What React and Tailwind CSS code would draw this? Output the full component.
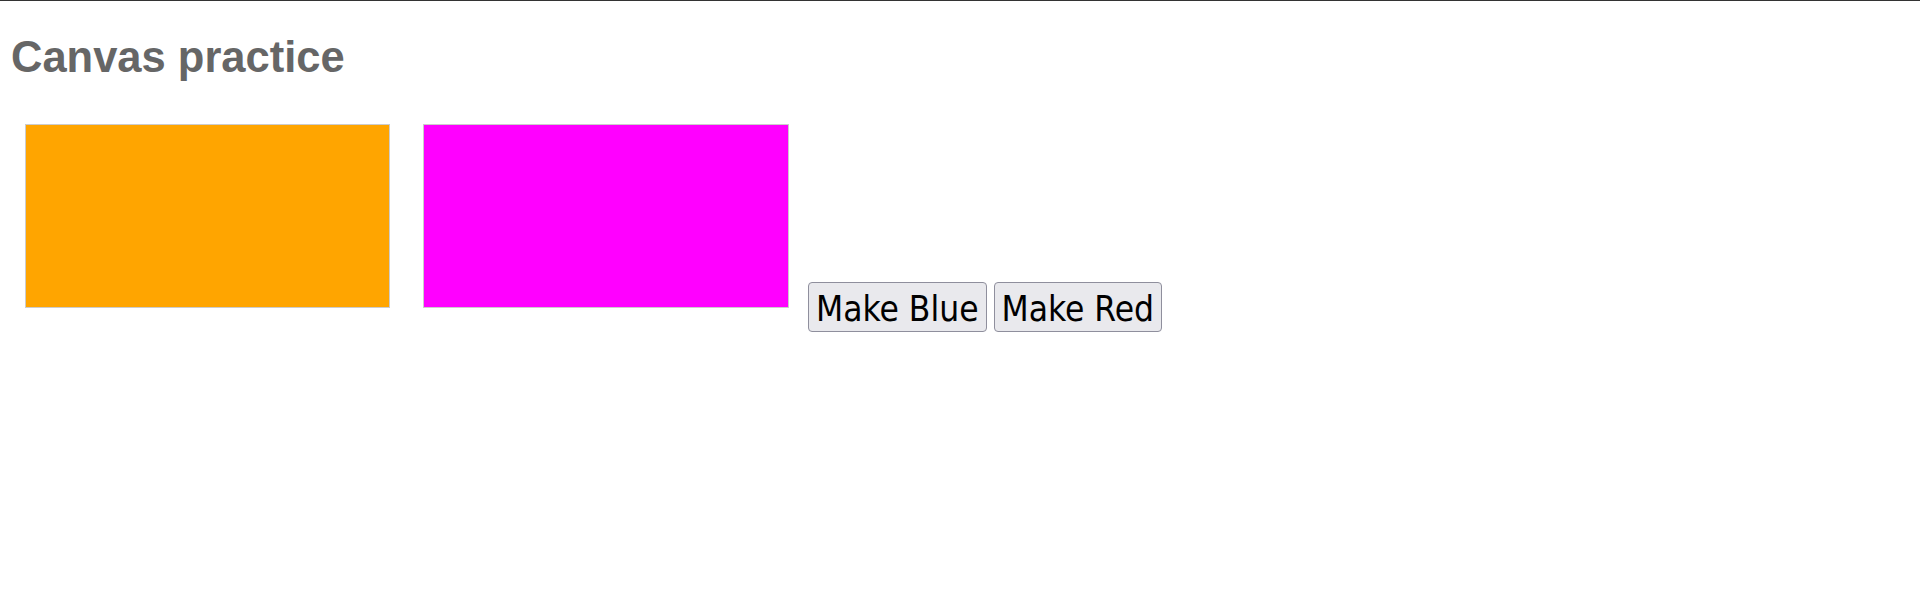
import React, { useState } from 'react';

export default function App() {
  const [second, setSecond] = useState('#ff00ff');

  return (
    <div className="min-h-[600px] bg-white border-t border-[#333333]">
      {/* Heading */}
      <h1 className="ml-[11px] mt-[32px] text-[43.5px] leading-[48px] font-bold text-[#666666] font-['Liberation_Sans',Arial,sans-serif]">
        Canvas practice
      </h1>

      {/* Canvases + buttons */}
      <div className="flex items-end mt-[43px] pl-[25px]">
        <div className="w-[365px] h-[184px] border border-[#cccccc] bg-[#ffa500] mb-[24px]" />
        <div
          className="w-[366px] h-[184px] border border-[#cccccc] ml-[33px] mb-[24px]"
          style={{ backgroundColor: second }}
        />
        <div className="flex gap-[7px] ml-[19px] font-['DejaVu_Sans_Condensed','DejaVu_Sans',sans-serif] text-[35px] text-black">
          <button
            onClick={() => setSecond('#0000ff')}
            className="h-[50px] px-[7px] pt-[5px] bg-[#e9e9ed] border border-[#8f8f9d] rounded-[4px] leading-none"
          >
            Make Blue
          </button>
          <button
            onClick={() => setSecond('#ff0000')}
            className="h-[50px] px-[7px] pt-[5px] bg-[#e9e9ed] border border-[#8f8f9d] rounded-[4px] leading-none"
          >
            Make Red
          </button>
        </div>
      </div>
    </div>
  );
}
